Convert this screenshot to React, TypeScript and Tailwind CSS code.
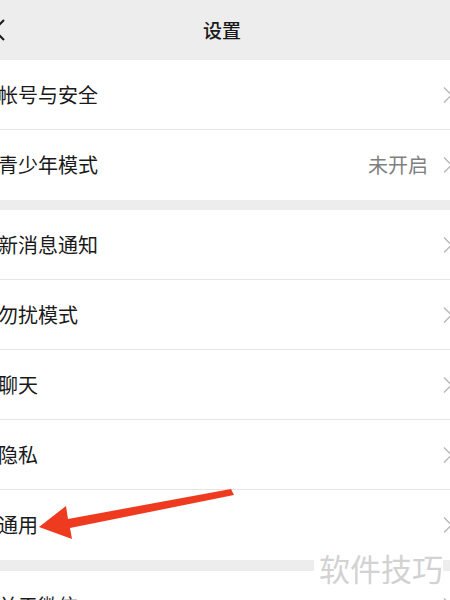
const font = { fontFamily: '"Noto Sans CJK SC", "Noto Sans", sans-serif' };

function Chevron() {
  return (
    <svg width="12" height="18" viewBox="0 0 12 18" className="-mr-[4px] shrink-0">
      <path d="M2 1.5 L9.5 9 L2 16.5" fill="none" stroke="#b8b8b8" strokeWidth="1.4" />
    </svg>
  );
}

function Row({ label, value, last }: { label: string; value?: string; last?: boolean }) {
  return (
    <div className={`flex h-[70px] items-center bg-white ${last ? '' : 'border-b border-[#e6e6e6]'}`}>
      <span className="-ml-[2px] flex-1 whitespace-nowrap text-[20px] text-[#1a1a1a]">{label}</span>
      {value && <span className="mr-[14px] text-[20px] text-[#7f7f7f]">{value}</span>}
      <Chevron />
    </div>
  );
}

export default function App() {
  return (
    <div className="relative h-[600px] w-[450px] overflow-hidden bg-[#ededed]" style={font}>
      <div className="relative flex h-[60px] items-center justify-center">
        <svg width="14" height="22" viewBox="0 0 14 22" className="absolute -left-[8px] top-[19px]">
          <path d="M12 1 L2 11 L12 21" fill="none" stroke="#1a1a1a" strokeWidth="2" />
        </svg>
        <span className="ml-[-6px] text-[19px] font-medium text-[#1a1a1a]">设置</span>
      </div>

      <div className="bg-white">
        <Row label="帐号与安全" />
        <Row label="青少年模式" value="未开启" last />
      </div>

      <div className="mt-[10px] bg-white">
        <Row label="新消息通知" />
        <Row label="勿扰模式" />
        <Row label="聊天" />
        <Row label="隐私" />
        <Row label="通用" last />
      </div>

      <div className="mt-[11px] bg-white">
        <Row label="关于微信" last />
      </div>

      <svg width="450" height="600" className="pointer-events-none absolute left-0 top-0">
        <polygon
          points="231,489 234,495 70,528 72,539 39,527 66,506 68,519"
          fill="#ee3a1f"
        />
      </svg>

      <div className="absolute left-[314px] top-[549px] whitespace-nowrap bg-white pl-[5px] text-[31px] leading-[38px] text-[#d2d2d2]">
        软件技巧
      </div>
    </div>
  );
}
